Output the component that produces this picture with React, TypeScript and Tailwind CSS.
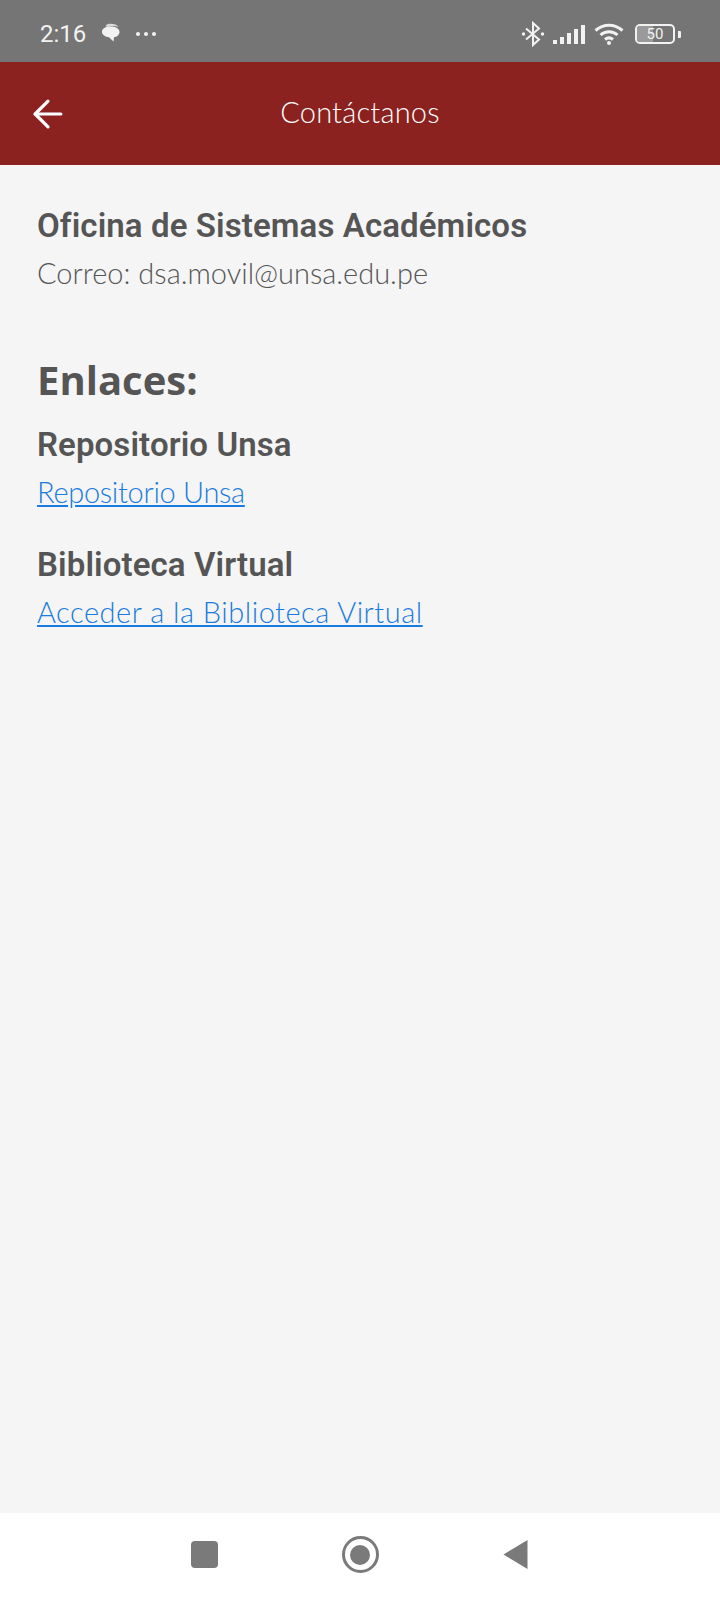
import { ArrowLeft } from "lucide-react";

function StatusBar() {
  return (
    <div className="h-[62px] bg-[#757575] flex items-center pl-[40px] pr-[39px] pt-[6px] text-[#f2f2f2]">
      <span className="font-['Roboto',sans-serif] text-[24px] font-normal leading-none">2:16</span>
      <svg className="ml-[14px]" width="22" height="22" viewBox="0 0 22 22" fill="currentColor">
        <path d="M8 1c4-.8 9 .5 11 3-3-1-7-1.500-10-.5C6 4.500 4 3 8 1z" opacity="0.8" />
        <path d="M10.500 3.500c5 0 9 2 9 5.500 0 3-2.500 4.800-5.500 5.200l-.5 4.300-4.500-4.300C5.500 13.800 2 12 2 8.700 2 5.500 5.500 3.500 10.500 3.500z" />
      </svg>
      <svg className="ml-[13px]" width="22" height="6" viewBox="0 0 22 6" fill="currentColor">
        <circle cx="3" cy="3" r="2" />
        <circle cx="11" cy="3" r="2" />
        <circle cx="19" cy="3" r="2" />
      </svg>
      <div className="ml-auto flex items-center">
        <svg width="24" height="26" viewBox="0 0 24 26" fill="none" stroke="currentColor" strokeWidth="2">
          <path d="M5 7.500l13 11-6 5.500V2l6 5.500-13 11" />
          <circle cx="2.500" cy="13" r="1.700" fill="currentColor" stroke="none" />
          <circle cx="21.500" cy="13" r="1.700" fill="currentColor" stroke="none" />
        </svg>
        <div className="ml-[8px] flex items-end gap-[3px] h-[20px]">
          <span className="w-[4px] h-[4px] bg-[#f2f2f2]" />
          <span className="w-[4px] h-[7px] bg-[#f2f2f2]" />
          <span className="w-[4px] h-[11px] bg-[#f2f2f2]" />
          <span className="w-[4px] h-[15px] bg-[#f2f2f2]" />
          <span className="w-[4px] h-[19px] bg-[#f2f2f2]" />
        </div>
        <svg className="ml-[9px]" width="30" height="24" viewBox="0 0 30 24" fill="none" stroke="currentColor" strokeWidth="3">
          <path d="M1.500 8.500c8-7 19-7 27 0" />
          <path d="M6.500 13c5-4.500 12-4.500 17 0" />
          <path d="M11 17.500c2.500-2 5.500-2 8 0" />
          <circle cx="15" cy="21" r="2" fill="currentColor" stroke="none" />
        </svg>
        <div className="ml-[11px] relative w-[40px] h-[20px] rounded-[5px] border-2 border-[#f2f2f2] overflow-hidden flex items-center justify-center">
          <span className="absolute left-0 top-0 bottom-0 w-[16px] bg-[#9a9a9a]" />
          <span className="relative font-['Roboto',sans-serif] text-[15px] leading-none">50</span>
        </div>
        <span className="ml-[3px] w-[3px] h-[7px] bg-[#f2f2f2] rounded-r-[1px]" />
      </div>
    </div>
  );
}

function Header() {
  return (
    <div className="h-[103px] bg-[#8b2220] grid grid-cols-[1fr_auto_1fr] items-center">
      <ArrowLeft className="ml-[26px] text-white" size={44} strokeWidth={1.75} />
      <h1 className="pb-[4px] font-['Lato',sans-serif] font-light text-[29px] tracking-[0.2px] text-white leading-none">
        Contáctanos
      </h1>
    </div>
  );
}

function LinkBlock({ title, label, tracking }: { title: string; label: string; tracking: string }) {
  return (
    <div>
      <h3 className="font-['Roboto',sans-serif] font-semibold text-[33px] tracking-[0.1px] leading-[36px] text-[#555555]">
        {title}
      </h3>
      <a className={`block mt-[12px] font-['Lato',sans-serif] font-light text-[29px] leading-[34px] text-[#1a7be0] underline ${tracking}`}>
        {label}
      </a>
    </div>
  );
}

function BottomNav() {
  return (
    <div className="h-[87px] bg-white flex items-center justify-center gap-[124px] pb-[4px] pr-[2px]">
      <span className="w-[27px] h-[27px] rounded-[4px] bg-[#7a7a7a]" />
      <span className="w-[37px] h-[37px] rounded-full border-[3px] border-[#7a7a7a] flex items-center justify-center">
        <span className="w-[20px] h-[20px] rounded-full bg-[#7a7a7a]" />
      </span>
      <svg width="25" height="31" viewBox="0 0 25 31" fill="#7a7a7a">
        <path d="M24.500 1v29L.5 15.500z" />
      </svg>
    </div>
  );
}

export default function App() {
  return (
    <div className="w-[720px] h-[1600px] flex flex-col bg-[#f5f5f5]">
      <StatusBar />
      <Header />
      <main className="flex-1 px-[37px] pt-[43px]">
        <h2 className="font-['Roboto',sans-serif] font-semibold text-[33px] tracking-[0.1px] leading-[36px] text-[#555555]">
          Oficina de Sistemas Académicos
        </h2>
        <p className="mt-[12px] font-['Lato',sans-serif] font-light text-[29px] leading-[34px] text-[#555555]">
          Correo: dsa.movil@unsa.edu.pe
        </p>
        <h2 className="mt-[65px] font-['Open_Sans',sans-serif] font-bold text-[40px] leading-[50px] text-[#555555]">
          Enlaces:
        </h2>
        <div className="mt-[22px] flex flex-col gap-[38px]">
          <LinkBlock title="Repositorio Unsa" label="Repositorio Unsa" tracking="tracking-[-0.3px]" />
          <LinkBlock title="Biblioteca Virtual" label="Acceder a la Biblioteca Virtual" tracking="tracking-[0.5px]" />
        </div>
      </main>
      <BottomNav />
    </div>
  );
}
